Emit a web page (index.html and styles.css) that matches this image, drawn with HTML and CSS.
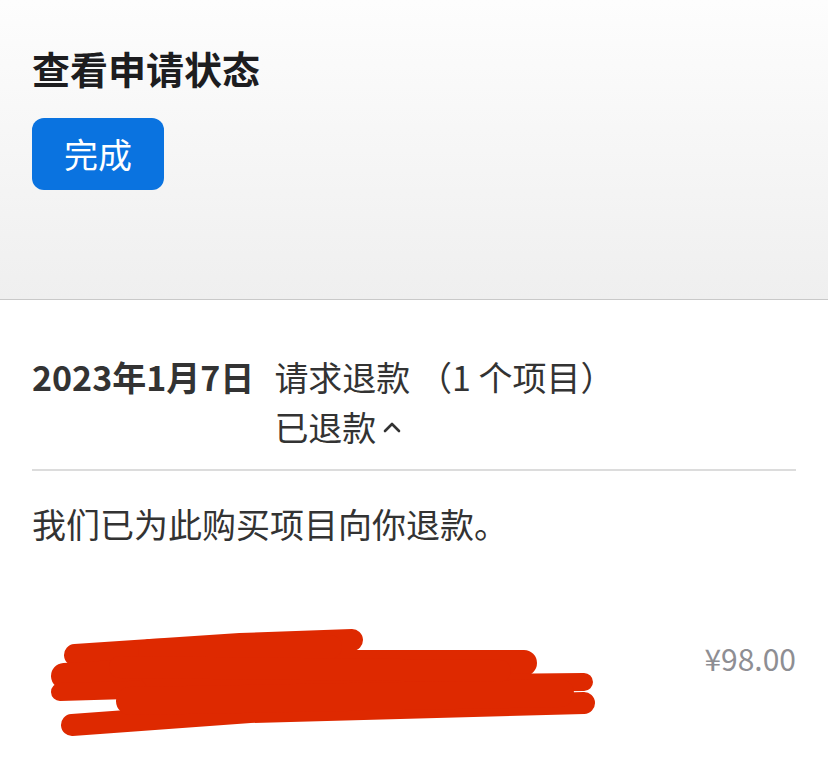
FILE: index.html
```html
<!DOCTYPE html>
<html lang="zh-CN">
<head>
  <meta charset="UTF-8">
  <meta name="viewport" content="width=device-width, initial-scale=1.0">
  <title>查看申请状态</title>
  <link rel="stylesheet" href="styles.css">
</head>
<body>
  <header class="cabecera">
    <h1>查看申请状态</h1>
    <button class="boton-listo">完成</button>
  </header>
  <main class="contenido">
    <div class="solicitud">
      <div class="fecha">2023年1月7日</div>
      <div class="detalle">
        <div>请求退款 （1 个项目）</div>
        <div class="estado">已退款
          <svg class="flecha" width="20" height="12" viewBox="0 0 20 12"><path d="M3 10 L10 3 L17 10" fill="none" stroke="#333" stroke-width="2.6" stroke-linecap="round" stroke-linejoin="round"/></svg>
        </div>
      </div>
    </div>
    <p class="mensaje">我们已为此购买项目向你退款。</p>
    <div class="articulo">
      <!-- tachado a mano sobre el nombre de la app -->
      <svg class="tachado" width="545" height="115" viewBox="50 625 545 115">
        <g fill="none" stroke="#de2900" stroke-linecap="round" stroke-linejoin="round">
          <path d="M75 656 L240 645 L352 641" stroke-width="22"/>
          <path d="M64 677 L300 664 L524 664" stroke-width="26"/>
          <path d="M60 693 L300 686 L584 683" stroke-width="18"/>
          <path d="M72 726 L250 713 L584 704" stroke-width="22"/>
          <path d="M160 672 L480 688" stroke-width="40"/>
          <path d="M130 702 L560 694" stroke-width="28"/>
          <path d="M150 652 L330 648" stroke-width="24"/>
          <path d="M120 668 L500 672" stroke-width="22"/>
        </g>
      </svg>
      <div class="precio">¥98.00</div>
    </div>
  </main>
</body>
</html>
```

FILE: styles.css
```css
body {
  font-family: "Noto Sans CJK SC", "Noto Sans", sans-serif;
  background-color: #fff;
  color: #333;
  margin: 0;
  padding: 0;
}
.cabecera {
  height: 300px;
  box-sizing: border-box;
  padding: 45px 32px 0;
  background: linear-gradient(#fdfdfd, #efefef);
  border-bottom: 1px solid #c9c9c9;
}
.cabecera h1 {
  margin: 0;
  font-size: 38px;
  line-height: 46px;
  font-weight: bold;
  color: #1d1d1f;
}
.boton-listo {
  margin-top: 27px;
  height: 72px;
  padding: 0 32px;
  border: none;
  border-radius: 12px;
  background-color: #0a73e0;
  color: #fff;
  font-family: inherit;
  font-size: 34px;
  line-height: 72px;
}
.contenido {
  padding: 52px 32px 0;
}
.solicitud {
  display: grid;
  grid-template-columns: auto 1fr;
  column-gap: 20px;
  font-size: 34px;
  line-height: 50px;
  padding-bottom: 17px;
  border-bottom: 2px solid #dcdcdc;
}
.fecha {
  font-weight: bold;
}
.estado {
  display: flex;
  align-items: center;
  gap: 6px;
}
.mensaje {
  margin: 28px 0 0;
  font-size: 34px;
  line-height: 50px;
}
.articulo {
  display: flex;
  justify-content: space-between;
  align-items: flex-start;
  margin-top: 75px;
}
.tachado {
  margin-left: 18px;
}
.precio {
  margin-top: 12px;
  font-size: 30px;
  color: #8e8e93;
}
```
